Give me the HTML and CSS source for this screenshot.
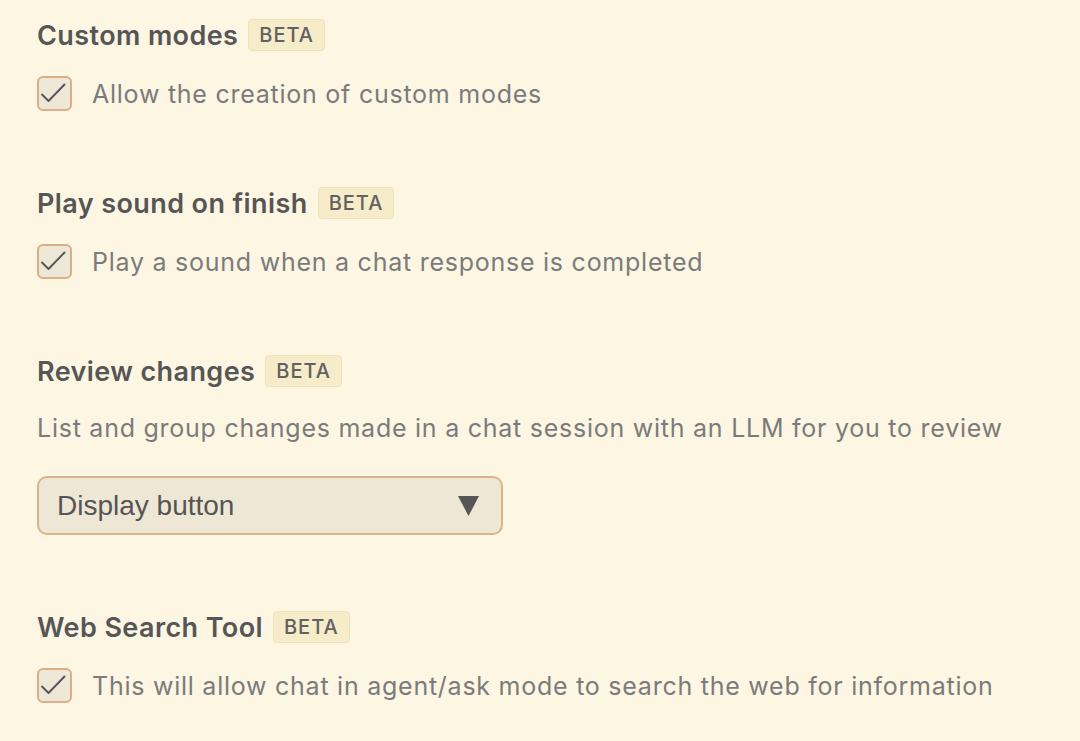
FILE: index.html
```html
<!DOCTYPE html>
<html>
<head>
<meta charset="utf-8">
<link rel="stylesheet" href="styles.css">
</head>
<body>
<div class="page">
  <section class="setting">
    <div class="title-row"><h2 class="title">Custom modes</h2><span class="badge">BETA</span></div>
    <label class="check-row"><span class="box"><svg viewBox="0 0 31 31" width="31" height="31"><path d="M3 16.5 L9.5 23 L25.5 6.5" fill="none" stroke="#555" stroke-width="1.9" stroke-linecap="round" stroke-linejoin="round"/></svg></span><span class="desc">Allow the creation of custom modes</span></label>
  </section>
  <section class="setting">
    <div class="title-row"><h2 class="title">Play sound on finish</h2><span class="badge">BETA</span></div>
    <label class="check-row"><span class="box"><svg viewBox="0 0 31 31" width="31" height="31"><path d="M3 16.5 L9.5 23 L25.5 6.5" fill="none" stroke="#555" stroke-width="1.9" stroke-linecap="round" stroke-linejoin="round"/></svg></span><span class="desc">Play a sound when a chat response is completed</span></label>
  </section>
  <section class="setting">
    <div class="title-row"><h2 class="title">Review changes</h2><span class="badge">BETA</span></div>
    <p class="desc plain">List and group changes made in a chat session with an LLM for you to review</p>
    <div class="select"><span class="select-text">Display button</span><svg class="arrow" viewBox="0 0 21 20" width="21" height="20"><path d="M0 0 H21 L10.5 20 Z" fill="#555"/></svg></div>
  </section>
  <section class="setting">
    <div class="title-row"><h2 class="title">Web Search Tool</h2><span class="badge">BETA</span></div>
    <label class="check-row"><span class="box"><svg viewBox="0 0 31 31" width="31" height="31"><path d="M3 16.5 L9.5 23 L25.5 6.5" fill="none" stroke="#555" stroke-width="1.9" stroke-linecap="round" stroke-linejoin="round"/></svg></span><span class="desc">This will allow chat in agent/ask mode to search the web for information</span></label>
  </section>
</div>
</body>
</html>
```
FILE: styles.css
```css
html, body {
  margin: 0;
  padding: 0;
  background: #fdf6e3;
}
.page {
  padding: 19px 0 0 37px;
  display: flex;
  flex-direction: column;
  gap: 76px;
  font-family: Inter, "Noto Sans", sans-serif;
}
.setting {
  display: flex;
  flex-direction: column;
  align-items: flex-start;
}
.title-row {
  display: flex;
  align-items: center;
  gap: 10px;
  height: 32px;
}
.title {
  margin: 0;
  font-size: 27px;
  font-weight: 600;
  color: #565656;
  letter-spacing: 0.4px;
}
.badge {
  box-sizing: border-box;
  height: 32px;
  padding: 0 10px;
  display: flex;
  align-items: center;
  font-size: 20px;
  font-weight: 500;
  color: #616161;
  background: #f6ecc9;
  border: 1px solid #efe2b7;
  border-radius: 4px;
  letter-spacing: 1px;
}
.check-row {
  margin-top: 25px;
  display: flex;
  align-items: center;
  gap: 20px;
}
.box {
  box-sizing: border-box;
  width: 35px;
  height: 35px;
  border: 2px solid #dcae86;
  border-radius: 6px;
  background: #ede7d7;
  display: flex;
  align-items: center;
  justify-content: center;
}
.desc {
  font-size: 25px;
  color: #7b7b7b;
  line-height: 30px;
  letter-spacing: 0.75px;
}
.plain {
  margin: 26px 0 0 0;
}
.select {
  box-sizing: border-box;
  margin-top: 33px;
  width: 466px;
  height: 59px;
  border: 2px solid #dcb28c;
  border-radius: 10px;
  background: #efe7d5;
  display: flex;
  align-items: center;
  justify-content: space-between;
  padding: 0 22px 0 18px;
}
.select-text {
  font-family: "Liberation Sans", Arial, sans-serif;
  font-size: 28px;
  color: #555;
}
.arrow {
  display: block;
}
```
